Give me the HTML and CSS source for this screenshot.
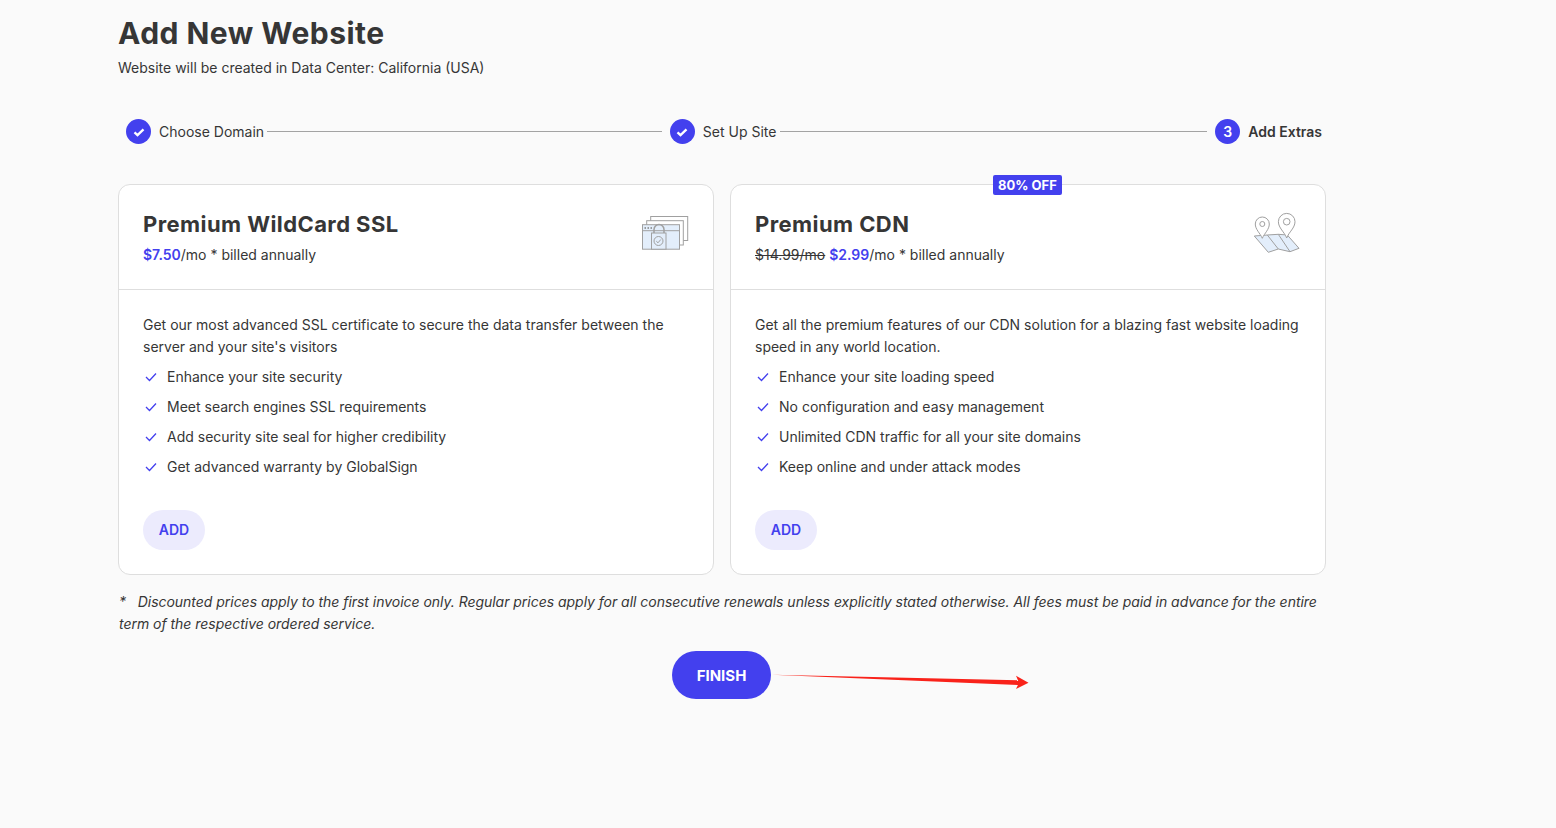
FILE: index.html
```html
<!DOCTYPE html>
<html lang="en">
<head>
<meta charset="utf-8">
<title>Add New Website</title>
<link rel="stylesheet" href="styles.css">
</head>
<body>
<main class="page">
  <h1 class="title">Add New Website</h1>
  <p class="subtitle">Website will be created in Data Center: California (USA)</p>

  <ol class="steps">
    <li class="step">
      <span class="dot"><svg width="14" height="14" viewBox="0 0 14 14"><path d="M2.500 7.300l3 2.800L11.500 4.300" fill="none" stroke="#fff" stroke-width="2.300"/></svg></span>
      <span class="step-label">Choose Domain</span>
    </li>
    <li class="line line-a"></li>
    <li class="step">
      <span class="dot"><svg width="14" height="14" viewBox="0 0 14 14"><path d="M2.500 7.300l3 2.800L11.500 4.300" fill="none" stroke="#fff" stroke-width="2.300"/></svg></span>
      <span class="step-label">Set Up Site</span>
    </li>
    <li class="line line-b"></li>
    <li class="step">
      <span class="dot dot-num">3</span>
      <span class="step-label step-current">Add Extras</span>
    </li>
  </ol>

  <section class="cards">
    <article class="card">
      <header class="card-head">
        <div>
          <h2 class="card-title">Premium WildCard SSL</h2>
          <p class="price"><b class="accent">$7.50</b>/mo * billed annually</p>
        </div>
        <svg class="card-icon" width="48" height="36" viewBox="0 0 48 36" fill="none" stroke="#a0a0a0" stroke-width="1">
          <rect x="9.700" y="1.500" width="37" height="24" fill="#fff"/>
          <rect x="5.700" y="5.700" width="36.600" height="24.300" fill="#fff"/>
          <rect x="1.500" y="9.700" width="37" height="24.500" fill="#e3eefb"/>
          <path d="M1.500 15.700h37"/>
          <path d="M3.500 13h1.500M6.500 13h1.500M9.500 13h1.500" stroke="#808080" stroke-width="1.500"/>
          <path d="M13 18v-3.500a4.500 4.500 0 0 1 10 0V18" stroke-width="1.500"/>
          <rect x="10.500" y="18" width="14.500" height="16.200" fill="#e3eefb"/>
          <circle cx="17.500" cy="26" r="4.500"/>
          <path d="M15.300 26.200l1.700 1.600 2.800-3.300"/>
        </svg>
      </header>
      <div class="card-body">
        <p class="desc">Get our most advanced SSL certificate to secure the data transfer between the server and your site's visitors</p>
        <ul class="features">
          <li class="feature"><svg class="tick" width="12" height="10" viewBox="0 0 12 10"><path d="M1 5l3.500 3.500L11 1.500" fill="none" stroke="#4340ee" stroke-width="1.300"/></svg>Enhance your site security</li>
          <li class="feature"><svg class="tick" width="12" height="10" viewBox="0 0 12 10"><path d="M1 5l3.500 3.500L11 1.500" fill="none" stroke="#4340ee" stroke-width="1.300"/></svg>Meet search engines SSL requirements</li>
          <li class="feature"><svg class="tick" width="12" height="10" viewBox="0 0 12 10"><path d="M1 5l3.500 3.500L11 1.500" fill="none" stroke="#4340ee" stroke-width="1.300"/></svg>Add security site seal for higher credibility</li>
          <li class="feature"><svg class="tick" width="12" height="10" viewBox="0 0 12 10"><path d="M1 5l3.500 3.500L11 1.500" fill="none" stroke="#4340ee" stroke-width="1.300"/></svg>Get advanced warranty by GlobalSign</li>
        </ul>
        <button class="add" type="button">ADD</button>
      </div>
    </article>

    <article class="card">
      <span class="badge">80% OFF</span>
      <header class="card-head">
        <div>
          <h2 class="card-title">Premium CDN</h2>
          <p class="price"><s>$14.99/mo</s> <b class="accent">$2.99</b>/mo * billed annually</p>
        </div>
        <svg class="card-icon card-icon-map" width="48" height="42" viewBox="0 0 48 42" fill="none" stroke="#a0a0a0" stroke-width="1">
          <path d="M1.300 24L14.300 23 25.300 22.300 34.300 23 46 36.300 37 39.700 25.300 37 15.300 40.300z" fill="#e3eefb"/>
          <path d="M14.300 23l11 14M25.300 22.300L37 39.700"/>
          <path d="M9.300 26.300C7 21 2.300 17.500 2.300 12a7 7 0 0 1 14 0c0 5.500-4.700 9-7 14.300z" fill="#fff"/>
          <circle cx="9.300" cy="12" r="2.500"/>
          <path d="M33.700 26C31.500 20 25.400 16 25.400 9.700a8.300 8.300 0 0 1 16.600 0c0 6.300-6.100 10.300-8.300 16.300z" fill="#fff"/>
          <circle cx="33.700" cy="9.700" r="3.300"/>
        </svg>
      </header>
      <div class="card-body">
        <p class="desc">Get all the premium features of our CDN solution for a blazing fast website loading speed in any world location.</p>
        <ul class="features">
          <li class="feature"><svg class="tick" width="12" height="10" viewBox="0 0 12 10"><path d="M1 5l3.500 3.500L11 1.500" fill="none" stroke="#4340ee" stroke-width="1.300"/></svg>Enhance your site loading speed</li>
          <li class="feature"><svg class="tick" width="12" height="10" viewBox="0 0 12 10"><path d="M1 5l3.500 3.500L11 1.500" fill="none" stroke="#4340ee" stroke-width="1.300"/></svg>No configuration and easy management</li>
          <li class="feature"><svg class="tick" width="12" height="10" viewBox="0 0 12 10"><path d="M1 5l3.500 3.500L11 1.500" fill="none" stroke="#4340ee" stroke-width="1.300"/></svg>Unlimited CDN traffic for all your site domains</li>
          <li class="feature"><svg class="tick" width="12" height="10" viewBox="0 0 12 10"><path d="M1 5l3.500 3.500L11 1.500" fill="none" stroke="#4340ee" stroke-width="1.300"/></svg>Keep online and under attack modes</li>
        </ul>
        <button class="add" type="button">ADD</button>
      </div>
    </article>
  </section>

  <p class="note">*&nbsp;&nbsp;&nbsp;Discounted prices apply to the first invoice only. Regular prices apply for all consecutive renewals unless explicitly stated otherwise. All fees must be paid in advance for the entire term of the respective ordered service.</p>

  <div class="actions">
    <button class="finish" type="button">FINISH</button>
    <svg class="arrow" width="260" height="20" viewBox="0 0 260 20">
      <path d="M0 .8L247 6.300 247 11z" fill="#f9221a"/>
      <path d="M244 1.700L256.500 8.700 244 15 247 8.700z" fill="#f9221a"/>
    </svg>
  </div>
</main>
</body>
</html>
```

FILE: styles.css
```css
* { box-sizing: border-box; }
html, body { margin: 0; height: 100%; }
body {
  background: #fafafa;
  color: #363636;
  font-family: Inter, "Liberation Sans", sans-serif;
  font-size: 14px;
  line-height: 22px;
  overflow: hidden;
}
.page { width: 1208px; margin-left: 118px; padding-top: 14px; }
.title { margin: 0; font-size: 30px; line-height: 38px; font-weight: 700; color: #363636; letter-spacing: .47px; }
.subtitle { margin: 5px 0 0; line-height: 22px; }

.steps {
  list-style: none;
  margin: 40px 0 0;
  padding: 0 4px 0 8px;
  display: flex;
  align-items: center;
  height: 25px;
}
.step { display: flex; align-items: center; gap: 8px; flex: none; }
.dot {
  width: 25px; height: 25px; border-radius: 50%;
  background: #4340ee; color: #fff;
  display: flex; align-items: center; justify-content: center;
  font-weight: 600; font-size: 14px;
}
.step-current { font-weight: 600; }
.line { flex: 1 1 0; height: 1px; background: #a3a3a3; margin: 0 8px 0 3px; }
.line-a { flex-grow: 394; }
.line-b { flex-grow: 426; margin-left: 4px; }

.cards { display: flex; gap: 16px; margin-top: 40px; }
.card {
  position: relative;
  flex: 1 1 0;
  height: 391px;
  background: #fff;
  border: 1px solid #dedede;
  border-radius: 12px;
}
.card-head {
  height: 105px;
  padding: 24px 24px 0;
  border-bottom: 1px solid #dedede;
  display: flex;
  justify-content: space-between;
  align-items: flex-start;
}
.card-title { margin: 0; font-size: 22px; line-height: 30px; font-weight: 700; letter-spacing: .42px; }
.price { margin: 5px 0 0; }
.accent { color: #4340ee; font-weight: 600; }
.card-icon { margin-top: 6px; flex: none; }
.card-icon-map { margin-top: 3px; }
.card-body { padding: 24px 24px 0; }
.desc { margin: 0; }
.features { list-style: none; margin: 4px 0 0; padding: 0; }
.feature { display: flex; align-items: center; height: 30px; }
.tick { margin: 0 10px 0 2px; flex: none; }
.add {
  display: block;
  margin-top: 28px;
  width: 62px; height: 40px;
  padding: 0 0 2px;
  border: 0; border-radius: 20px;
  background: #ecebfd; color: #4340ee;
  font: 600 14px Inter, "Liberation Sans", sans-serif;
}
.badge {
  position: absolute;
  top: -10px; left: 262px;
  height: 20px; padding: 0 5px;
  background: #4340ee; color: #fff;
  font-size: 13px; line-height: 20px; font-weight: 700;
  border-radius: 2px;
}
.note { margin: 16px 0 0 1px; font-style: italic; letter-spacing: -0.03px; }
.actions { position: relative; display: flex; justify-content: center; margin-top: 16px; padding-right: 1px; }
.finish {
  width: 99px; height: 48px;
  padding: 0;
  border: 0; border-radius: 24px;
  background: #4340ee; color: #fff;
  font: 700 15px Inter, "Liberation Sans", sans-serif;
}
.arrow { position: absolute; left: 654px; top: 23px; }
```
